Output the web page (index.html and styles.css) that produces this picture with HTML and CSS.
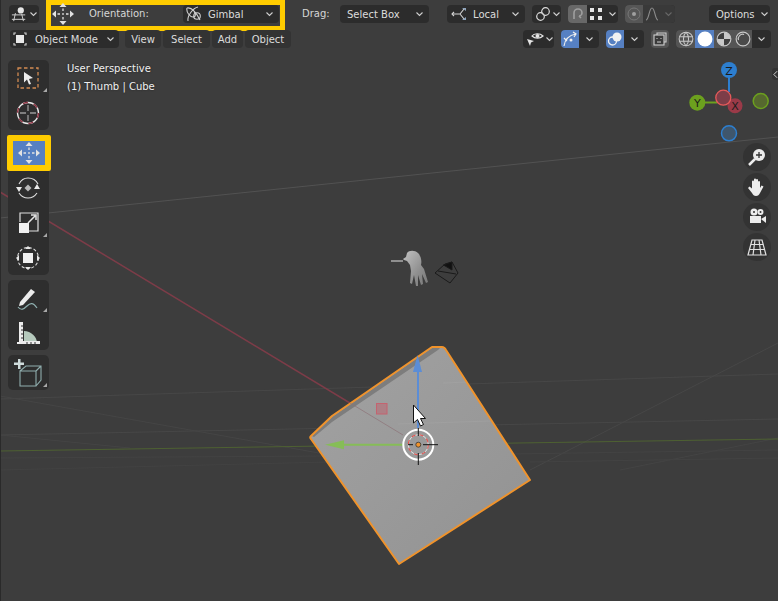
FILE: index.html
```
<!DOCTYPE html>
<html lang="en">
<head>
<meta charset="utf-8">
<title>Blender viewport</title>
<link rel="stylesheet" href="styles.css">
</head>
<body>
<svg class="defs" width="0" height="0" aria-hidden="true">
  <symbol id="chev" viewBox="0 0 9 6"><path d="M1.500 1.500l3 3 3-3" fill="none" stroke="#d0d0d0" stroke-width="1.100"/></symbol>
  <symbol id="move" viewBox="0 0 24 24">
    <path d="M12 1l3.500 4h-7zM12 23l-3.500-4h7zM1 12l4-3.500v7zM23 12l-4-3.500v7z" fill="#e2e2e2"/>
    <path d="M12 6.500v2.500M12 15v2.500M6.500 12H9M15 12h2.500" stroke="#e2e2e2" stroke-width="1.300"/>
    <rect x="11.200" y="11.200" width="1.600" height="1.600" fill="#e2e2e2"/>
  </symbol>
</svg>
<main class="stage">
  <svg class="scene" viewBox="0 0 778 601" aria-hidden="true">
    <defs>
      <linearGradient id="cubeFill" x1="0" y1="0" x2="1" y2="1">
        <stop offset="0" stop-color="#a2a2a2"/><stop offset="1" stop-color="#929292"/>
      </linearGradient>
      <linearGradient id="handFill" x1="0" y1="0" x2="1" y2="1">
        <stop offset="0" stop-color="#c2c2c2"/><stop offset="0.6" stop-color="#8f8f8f"/><stop offset="1" stop-color="#777"/>
      </linearGradient>
      <filter id="soft"><feGaussianBlur stdDeviation="0.4"/></filter>
    </defs>
    <g fill="none" stroke-width="1">
      <path d="M0 218L778 137" stroke="#525252"/>
      <path d="M0 399L778 374" stroke="#474747"/>
      <path d="M0 435L778 419" stroke="#474747"/>
      <path d="M0 396L330 455" stroke="#454545"/>
      <path d="M0 435L130 448" stroke="#444"/>
      <path d="M530 470L778 343" stroke="#474747"/>
      <path d="M620 470L778 438" stroke="#444"/>
      <path d="M0 458L330 456M510 454L778 450M530 462L778 458" stroke="#434343"/>
      <path d="M0 470L330 462" stroke="#424242"/>
      <path d="M0 451L778 439" stroke="#4e6132"/>
      <path d="M0 192L403 435" stroke="#7d3c48" stroke-width="1.500"/>
    </g>

    <g class="hand" filter="url(#soft)">
      <path d="M391 261h12" stroke="#b4b4b4" stroke-width="1.400"/>
      <path d="M403 259l3-2 1-4c2-3 8-3 11 0 3 3 4 8 3 12l3 4 4 13-2 1-4-9 1 10-2 1-3-10 0 11-2 0-2-11-2 9-2-1 1-12-1-6-3-4-3-1z" fill="url(#handFill)"/>
    </g>
    <g class="camera" fill="none" stroke="#1a1a1a" stroke-width="1">
      <path d="M435 273L445 264L452 262L458 273L450 283zM438 271L456 274"/>
      <path d="M443.500 265L452 262V270z" fill="#111"/>
    </g>

    <path d="M432 347h10c2 0 3 1 4 3l84 130-131 84-88-125c-1-1-1-2 0-3l21-20z" fill="url(#cubeFill)"/>
    <path d="M312 436l20-19 100-69h8l-2 2-106 72-18 15z" fill="#7d7d7d"/>
    <path d="M443 383L467 382M398 424L490 421" stroke="#a8a8a8" stroke-width="1" opacity="0.4"/>
    <path d="M432 347h10c2 0 3 1 4 3l84 130-131 84-88-125c-1-1-1-2 0-3l21-20z" fill="none" stroke="#f0932b" stroke-width="2" stroke-linejoin="round"/>
    <path d="M350 403L403 435" stroke="#8d7378" stroke-width="1" opacity="0.7"/>

    <rect x="376.500" y="403.500" width="10.500" height="10.500" fill="#ad7f85" stroke="#c4636f"/>
    <path d="M418 370v58" stroke="#5b8dd6" stroke-width="2"/>
    <path d="M417.500 355l-4.500 17h9z" fill="#5b8dd6"/>
    <path d="M343 444.700h60" stroke="#86bd57" stroke-width="2"/>
    <path d="M325 444.700l19-4.500v9z" fill="#86bd57"/>

    <circle cx="418.300" cy="444.700" r="15" fill="none" stroke="#fff" stroke-width="2"/>
    <circle cx="418.300" cy="444.700" r="10" fill="none" stroke="#e4e4e4" stroke-width="1"/>
    <circle cx="418.300" cy="444.700" r="10" fill="none" stroke="#e0524f" stroke-width="1.100" stroke-dasharray="4 4"/>
    <path d="M418.300 428v8M418.300 453v12M423 444.700h15M408 444.700h5" stroke="#111" stroke-width="1"/>
    <circle cx="418.300" cy="444.700" r="2.500" fill="#f0932b" stroke="#333" stroke-width="0.800"/>
    <path d="M413.500 405v18l4-3.500 3 6.500 3-1.500-3-6h5z" fill="#fff" stroke="#111" stroke-width="1"/>

    <path d="M729 70v22" stroke="#2d7fd0" stroke-width="2"/>
    <path d="M697 102.500h20" stroke="#6ca01e" stroke-width="2"/>
    <circle cx="729" cy="133.300" r="7.500" fill="#3f566c" stroke="#2d7fd0" stroke-width="1.500"/>
    <circle cx="760.700" cy="101" r="7.500" fill="#56682f" stroke="#6ca01e" stroke-width="1.500"/>
    <circle cx="729" cy="70" r="8" fill="#2d7fd0"/>
    <circle cx="697.300" cy="102.700" r="8" fill="#6ca01e"/>
    <circle cx="735" cy="105.700" r="7.500" fill="#9a3a48"/>
    <circle cx="723.300" cy="97.700" r="7.500" fill="#7d3d48" stroke="#e65a5a" stroke-width="1.300"/>
    <text class="axis" x="729" y="74.500">Z</text>
    <text class="axis" x="697.300" y="107">Y</text>
    <text class="axis" x="735" y="110">X</text>
  </svg>

  <header class="header">
    <div class="row row-top">
      <button class="btn editor" type="button">
        <svg class="ico16" viewBox="0 0 18 16"><circle cx="11" cy="4" r="3.500" fill="#e6e6e6"/><path d="M1 9h15M1 14h15M5 7l-2 9M12 8l2 8" stroke="#cfcfcf" stroke-width="1.100" fill="none"/></svg>
        <svg class="chev"><use href="#chev"/></svg>
      </button>
      <div class="highlight">
        <svg class="gizmo-ico"><use href="#move"/></svg>
        <span class="label orient-label">Orientation:</span>
        <button class="btn select orient" type="button">
          <svg class="ico16" viewBox="0 0 16 16"><g fill="none" stroke="#cfcfcf" stroke-width="1.100"><path d="M1 2c5-1 10 6 13 12M2 15C1 10 7 2 12 1"/><path d="M1 2c-1 4 3 9 6 9s3-4 1-5"/><circle cx="11" cy="10" r="3.300"/></g></svg>
          <span class="grow">Gimbal</span>
          <svg class="chev"><use href="#chev"/></svg>
        </button>
      </div>
      <span class="label drag-label">Drag:</span>
      <button class="btn select drag" type="button"><span class="grow">Select Box</span><svg class="chev"><use href="#chev"/></svg></button>
      <button class="btn select local" type="button">
        <svg class="ico16" viewBox="0 0 16 16"><g fill="none" stroke="#d6d6d6" stroke-width="1.100"><path d="M1 8h8l4-5M9 8l4 5"/><path d="M3 6L1 8l2 2"/></g><path d="M11 2h4v3zM11 14h4v-3z" fill="#8fa5bd"/></svg>
        <span class="grow">Local</span><svg class="chev"><use href="#chev"/></svg>
      </button>
      <button class="btn link" type="button">
        <svg class="ico16" viewBox="0 0 16 16"><g fill="none" stroke="#dcdcdc" stroke-width="1.200"><circle cx="5.500" cy="10.500" r="3.800"/><circle cx="10.500" cy="5.500" r="3.800"/></g></svg>
        <svg class="chev"><use href="#chev"/></svg>
      </button>
      <div class="segmented snap">
        <span class="cell on-grey"><svg class="ico14" viewBox="0 0 14 14"><path d="M3 12V6a4 4 0 0 1 8 0c0 2-2 3-3 3M8 9l2 2" fill="none" stroke="#9f9f9f" stroke-width="1.600"/></svg></span>
        <span class="cell"><svg class="ico14" viewBox="0 0 14 14"><path d="M1 1h4v4H1zM9 1h4v4H9zM1 9h4v4H1zM9 9h4v4H9z" fill="#e6e6e6"/></svg></span>
        <span class="cell tail"><svg class="chev"><use href="#chev"/></svg></span>
      </div>
      <div class="segmented prop">
        <span class="cell on-dim"><svg class="ico14" viewBox="0 0 14 14"><circle cx="7" cy="7" r="6" fill="none" stroke="#777" stroke-width="1"/><circle cx="7" cy="7" r="2" fill="#a0a0a0"/></svg></span>
        <span class="cell dim"><svg class="ico14" viewBox="0 0 14 14"><path d="M1 13C4 13 4 1 7 1s3 12 6 12" fill="none" stroke="#8a8a8a" stroke-width="1.100"/></svg></span>
        <span class="cell dim tail"><svg class="chev faded"><use href="#chev"/></svg></span>
      </div>
      <button class="btn select options" type="button"><span class="grow">Options</span><svg class="chev"><use href="#chev"/></svg></button>
    </div>

    <div class="row row-bottom">
      <button class="btn select mode" type="button">
        <svg class="ico14" viewBox="0 0 14 14"><path d="M3 1H1v2M11 1h2v2M3 13H1v-2M11 13h2v-2" fill="none" stroke="#ccc" stroke-width="1.200"/><rect x="3" y="3" width="8" height="8" fill="#e8e8e8"/></svg>
        <span class="grow">Object Mode</span><svg class="chev"><use href="#chev"/></svg>
      </button>
      <nav class="menus">
        <span class="menu m-view">View</span>
        <span class="menu m-select">Select</span>
        <span class="menu m-add">Add</span>
        <span class="menu m-object">Object</span>
      </nav>
      <div class="right-tools">
        <button class="btn vis" type="button">
          <svg class="ico18" viewBox="0 0 18 16"><path d="M6 5c2-3 8-3 11 0-3 3-8 3-11 0z" fill="none" stroke="#e4e4e4" stroke-width="1.200"/><circle cx="11.500" cy="5" r="2" fill="#e4e4e4"/><path d="M1 8l7 2-3 1.500L4 15z" fill="#e4e4e4"/></svg>
          <svg class="chev"><use href="#chev"/></svg>
        </button>
        <div class="segmented gizmos">
          <span class="cell on-blue"><svg class="ico16" viewBox="0 0 16 16"><path d="M2 15C3 8 8 4 14 3M2 7l3 3M11 1l3 2-2 3" fill="none" stroke="#f0f0f0" stroke-width="1.200"/><circle cx="9" cy="9" r="1.500" fill="#f0f0f0"/></svg></span>
          <span class="cell tail wide"><svg class="chev"><use href="#chev"/></svg></span>
        </div>
        <div class="segmented overlays">
          <span class="cell on-blue"><svg class="ico16" viewBox="0 0 16 16"><circle cx="5.500" cy="10" r="4" fill="none" stroke="#f2f2f2" stroke-width="1.300"/><circle cx="10" cy="6" r="4.500" fill="#f2f2f2"/></svg></span>
          <span class="cell tail wide"><svg class="chev"><use href="#chev"/></svg></span>
        </div>
        <button class="btn xray" type="button"><svg class="ico14" viewBox="0 0 14 14"><path d="M4 3V1h9v9h-2" fill="none" stroke="#cfcfcf" stroke-width="1.100"/><rect x="1" y="3" width="10" height="10" fill="#3a3a3a" stroke="#cfcfcf" stroke-width="1.100"/><path d="M4 6v1M8 6v1M4 10h4" stroke="#cfcfcf"/></svg></button>
        <div class="segmented shading">
          <span class="cell on-mid"><svg class="ico16" viewBox="0 0 14 14"><g fill="none" stroke="#c8c8c8" stroke-width="0.900"><circle cx="7" cy="7" r="6"/><path d="M1 5h12M1 9h12M7 1c-3 3-3 9 0 12M7 1c3 3 3 9 0 12"/></g></svg></span>
          <span class="cell on-blue"><svg class="ico16" viewBox="0 0 14 14"><circle cx="7" cy="7" r="6.500" fill="#fff"/></svg></span>
          <span class="cell on-mid"><svg class="ico16" viewBox="0 0 14 14"><circle cx="7" cy="7" r="6" fill="#3f3f3f" stroke="#c8c8c8"/><path d="M7 1a6 6 0 0 1 6 6H7zM1 7h6v6a6 6 0 0 1-6-6z" fill="#c8c8c8"/></svg></span>
          <span class="cell on-mid"><svg class="ico16" viewBox="0 0 14 14"><circle cx="7" cy="7" r="6" fill="#4a4a4a" stroke="#c8c8c8"/><path d="M3 8a4 4 0 0 1 5-5" fill="none" stroke="#c8c8c8"/></svg></span>
          <span class="cell tail wide"><svg class="chev"><use href="#chev"/></svg></span>
        </div>
      </div>
    </div>
  </header>

  <div class="workspace">
    <aside class="toolbar">
      <div class="tool-group">
        <div class="tool more"><svg class="tool-ico" viewBox="0 0 24 24"><rect x="2" y="2" width="20" height="20" fill="none" stroke="#d28a52" stroke-width="1.300" stroke-dasharray="3.500 2.500"/><path d="M8 6l9 6-4 1 2 5-2 .5-2-5-3 3z" fill="#ececec"/></svg></div>
        <div class="tool"><svg class="tool-ico" viewBox="0 0 24 24"><circle cx="12" cy="12" r="10.500" fill="none" stroke="#e8e8e8" stroke-width="1.300"/><circle cx="12" cy="12" r="10.500" fill="none" stroke="#8c3040" stroke-width="1.400" stroke-dasharray="5 6"/><path d="M12 4v6M12 14v6M4 12h6M14 12h6" stroke="#9a9a9a" stroke-width="1.300"/></svg></div>
      </div>
      <div class="tool-group">
        <div class="tool active"><svg class="gizmo-ico"><use href="#move"/></svg></div>
        <div class="tool"><svg class="tool-ico" viewBox="0 0 24 24"><path d="M3 8C5 4 8 2 12 2s8 2 10 6M21 17c-2 3-5 5-9 5s-7-2-9-5" fill="none" stroke="#dedede" stroke-width="1.100"/><path d="M0 11h6l-3 5zM24 13h-6l3-5z" fill="#e8e8e8"/><path d="M12 8.500l3.500 3.500-3.500 3.500L8.500 12z" fill="#b8b8b8"/></svg></div>
        <div class="tool more"><svg class="tool-ico" viewBox="0 0 24 24"><path d="M4 11V2h18v18h-9" fill="none" stroke="#dedede" stroke-width="1.200"/><rect x="3" y="12" width="10" height="10" fill="#f0f0f0"/><path d="M12 12l7-7M15 4h5v5" fill="none" stroke="#e4e4e4" stroke-width="1.500"/></svg></div>
        <div class="tool"><svg class="tool-ico" viewBox="0 0 24 24"><circle cx="12" cy="12" r="10.500" fill="none" stroke="#dcdcdc" stroke-width="1.100" stroke-dasharray="3 2"/><path d="M12 0l3 3H9zM12 24l-3-3h6zM0 12l3-3v6zM24 12l-3-3v6z" fill="#e8e8e8"/><rect x="7" y="7" width="10" height="10" fill="#f0f0f0"/></svg></div>
      </div>
      <div class="tool-group">
        <div class="tool more"><svg class="tool-ico" viewBox="0 0 24 24"><path d="M4 16L15 3l4 3L7 19l-4 1z" fill="#ececec"/><path d="M2 21c3 4 6 2 9-1s6-4 10 2" fill="none" stroke="#8fb0b0" stroke-width="1.200"/></svg></div>
        <div class="tool"><svg class="tool-ico" viewBox="0 0 24 24"><path d="M8 10c7 0 13 6 13 12H8z" fill="#b5c9bc"/><path d="M3 1h4v19h17v3H1v-2h2z" fill="#ececec"/><path d="M7 5H5M7 9H5M7 13H5M7 17H5M11 23v-2M15 23v-2M19 23v-2" stroke="#333"/></svg></div>
      </div>
      <div class="tool-group">
        <div class="tool more"><svg class="tool-ico wide-ico" viewBox="0 0 28 28"><path d="M4 0h2.500v3.500H10V6H6.500v4H4V6H0V3.500h4z" fill="#cfdcdc"/><g fill="none" stroke="#8fadad" stroke-width="1.100"><path d="M6 12h16v15H6zM6 12l6-5h15v14l-5 6M22 12l5-5"/></g></svg></div>
      </div>
    </aside>
    <div class="info">
      <p>User Perspective</p>
      <p>(1) Thumb | Cube</p>
    </div>
    <div class="nav-side">
      <span class="side-tab"><svg viewBox="0 0 6 10" class="tab-ico"><path d="M5 1L1 5l4 4" fill="none" stroke="#d0d0d0" stroke-width="1.200"/></svg></span>
      <div class="nav-btns">
        <span class="nav-btn"><svg class="ico20" viewBox="0 0 20 20"><circle cx="12" cy="8" r="6" fill="#ececec"/><path d="M8 12l-6 6" stroke="#ececec" stroke-width="2.500"/><path d="M12 5v6M9 8h6" stroke="#333" stroke-width="1.300"/></svg></span>
        <span class="nav-btn"><svg class="ico20" viewBox="0 0 20 20"><path d="M5 16L1 11l1.500-1.500L5 11.500V4.500a1 1 0 0 1 2 0V9V2.500a1 1 0 0 1 2 0V9V3a1 1 0 0 1 2 0v6V5a1 1 0 0 1 2 0v6l1.500-2.500 2 1L13 16c-1 2-2 3-4 3s-3-1-4-3z" fill="#ececec"/></svg></span>
        <span class="nav-btn"><svg class="ico20" viewBox="0 0 20 20"><circle cx="7" cy="5" r="3.500" fill="#ececec"/><circle cx="13.500" cy="5" r="3" fill="#ececec"/><circle cx="7" cy="5" r="1" fill="#333"/><circle cx="13.500" cy="5" r="1" fill="#333"/><rect x="3" y="9" width="11" height="7" fill="#ececec"/><path d="M14 12l5-3v7z" fill="#ececec"/></svg></span>
        <span class="nav-btn"><svg class="ico20" viewBox="0 0 20 20"><path d="M5 3h10l4 15H1zM4 7.500h12M2.500 12.500h15M8 3l-2 15M12 3l2 15" fill="none" stroke="#e0e0e0" stroke-width="1.200"/></svg></span>
      </div>
    </div>
  </div>
</main>
</body>
</html>
```

FILE: styles.css
```
* { box-sizing: border-box; }
html, body { margin: 0; padding: 0; }
body { background: #3d3d3d; font-family: "DejaVu Sans", sans-serif; font-size: 10px; color: #dcdcdc; }
.defs { position: absolute; }
.stage { position: relative; width: 778px; height: 601px; overflow: hidden; background: #3d3d3d; display: flex; flex-direction: column; }
.scene { position: absolute; left: 0; top: 0; width: 778px; height: 601px; }
.stage::before { content: ""; position: absolute; left: 0; top: 0; bottom: 0; width: 1px; background: #2a2a2a; z-index: 1; }
.axis { font: 11px "DejaVu Sans", sans-serif; fill: #1c1c1c; text-anchor: middle; }

.header { position: relative; display: flex; flex-direction: column; gap: 7px; padding-top: 5px; }
.row { display: flex; align-items: flex-start; height: 18px; }
.row-top { padding-left: 9px; }
.row-bottom { padding-left: 10px; }

.btn { display: flex; align-items: center; height: 18px; border: 0; padding: 0; background: #2c2c2c; border-radius: 4px; color: #dcdcdc; font: inherit; }
.select { padding: 0 5px 0 7px; gap: 5px; }
.grow { flex: 1; text-align: left; white-space: nowrap; }
.chev { width: 9px; height: 6px; flex: none; }
.faded { opacity: 0.3; }
.ico14 { width: 14px; height: 14px; flex: none; }
.ico16 { width: 16px; height: 16px; flex: none; }
.ico18 { width: 18px; height: 16px; flex: none; }
.ico20 { width: 20px; height: 20px; }

.editor { width: 30px; justify-content: center; gap: 2px; margin-right: 7px; }
.highlight { display: flex; align-items: flex-start; width: 239px; height: 31px; margin-top: -5px; border: 5px solid #ffcc00; }
.gizmo-ico { width: 24px; height: 24px; flex: none; }
.highlight .gizmo-ico { margin-top: -3px; }
.label { line-height: 18px; white-space: nowrap; color: #d6d6d6; }
.orient-label { margin-left: 14px; width: 94px; }
.orient { width: 96px; padding-left: 3px; gap: 6px; }
.drag-label { margin-left: 17px; width: 38px; }
.drag { width: 89px; }
.local { width: 78px; margin-left: 18px; padding-left: 4px; gap: 6px; }
.link { width: 29px; margin-left: 7px; padding-left: 3px; gap: 1px; }

.segmented { display: flex; height: 18px; border-radius: 4px; overflow: hidden; background: #2c2c2c; flex: none; }
.cell { display: flex; align-items: center; justify-content: center; width: 18px; height: 18px; flex: none; }
.tail { width: 14px; }
.tail.wide { width: 20px; }
.on-grey { width: 19px; background: #686868; }
.on-dim { background: #565656; }
.dim { background: #393939; }
.on-blue { background: #5680c2; }
.on-mid { background: #545454; }
.snap { width: 50px; margin-left: 7px; }
.prop { width: 50px; margin-left: 7px; }
.options { width: 61px; margin-left: 34px; padding-left: 7px; }

.mode { width: 109px; padding-left: 3px; gap: 8px; }
.menus { display: flex; gap: 2px; margin-left: 6px; }
.menu { height: 18px; line-height: 19px; text-align: center; background: #333; border-radius: 4px; color: #dcdcdc; }
.m-view { width: 36px; }
.m-select { width: 47px; }
.m-add { width: 31px; }
.m-object { width: 46px; }
.right-tools { display: flex; gap: 7px; margin-left: auto; margin-right: 7px; }
.vis { width: 31px; padding-left: 3px; gap: 1px; }
.gizmos, .overlays { width: 38px; }
.xray { width: 18px; justify-content: center; background: #545454; }
.shading { width: 95px; }
.shading .cell { width: 19px; }

.workspace { position: relative; display: flex; align-items: flex-start; padding: 12px 0 0 8px; flex: 1; }
.toolbar { display: flex; flex-direction: column; gap: 5px; width: 41px; flex: none; }
.tool-group { display: flex; flex-direction: column; background: #2e2e2e; border-radius: 5px; }
.tool { position: relative; display: flex; align-items: center; justify-content: center; height: 35px; padding-right: 1px; }
.tool-ico { width: 24px; height: 24px; }
.wide-ico { width: 28px; height: 28px; }
.more::after { content: ""; position: absolute; right: 2px; bottom: 3px; width: 4px; height: 4px; background: #a8a8a8; clip-path: polygon(100% 0, 100% 100%, 0 100%); }
.active { height: 36px; margin: 0 -2px -1px -1px; padding: 0; border: 6px solid #ffcc00; border-radius: 2px; background: #5680c2; z-index: 2; }

.info { margin: 2px 0 0 18px; color: #f0f0f0; text-shadow: 0 0 2px #222; }
.info p { margin: 0; height: 18px; line-height: 14px; }

.nav-side { position: relative; display: flex; flex-direction: column; align-items: flex-end; margin-left: auto; flex: 1; }
.side-tab { display: flex; align-items: center; justify-content: center; width: 6px; height: 12px; margin-top: 8px; background: #333; border-radius: 3px 0 0 3px; }
.tab-ico { width: 5px; height: 9px; }
.nav-btns { display: flex; flex-direction: column; gap: 2px; margin: 63px 7px 0 0; }
.nav-btn { display: flex; align-items: center; justify-content: center; width: 28px; height: 28px; border-radius: 50%; background: #333; }
```
